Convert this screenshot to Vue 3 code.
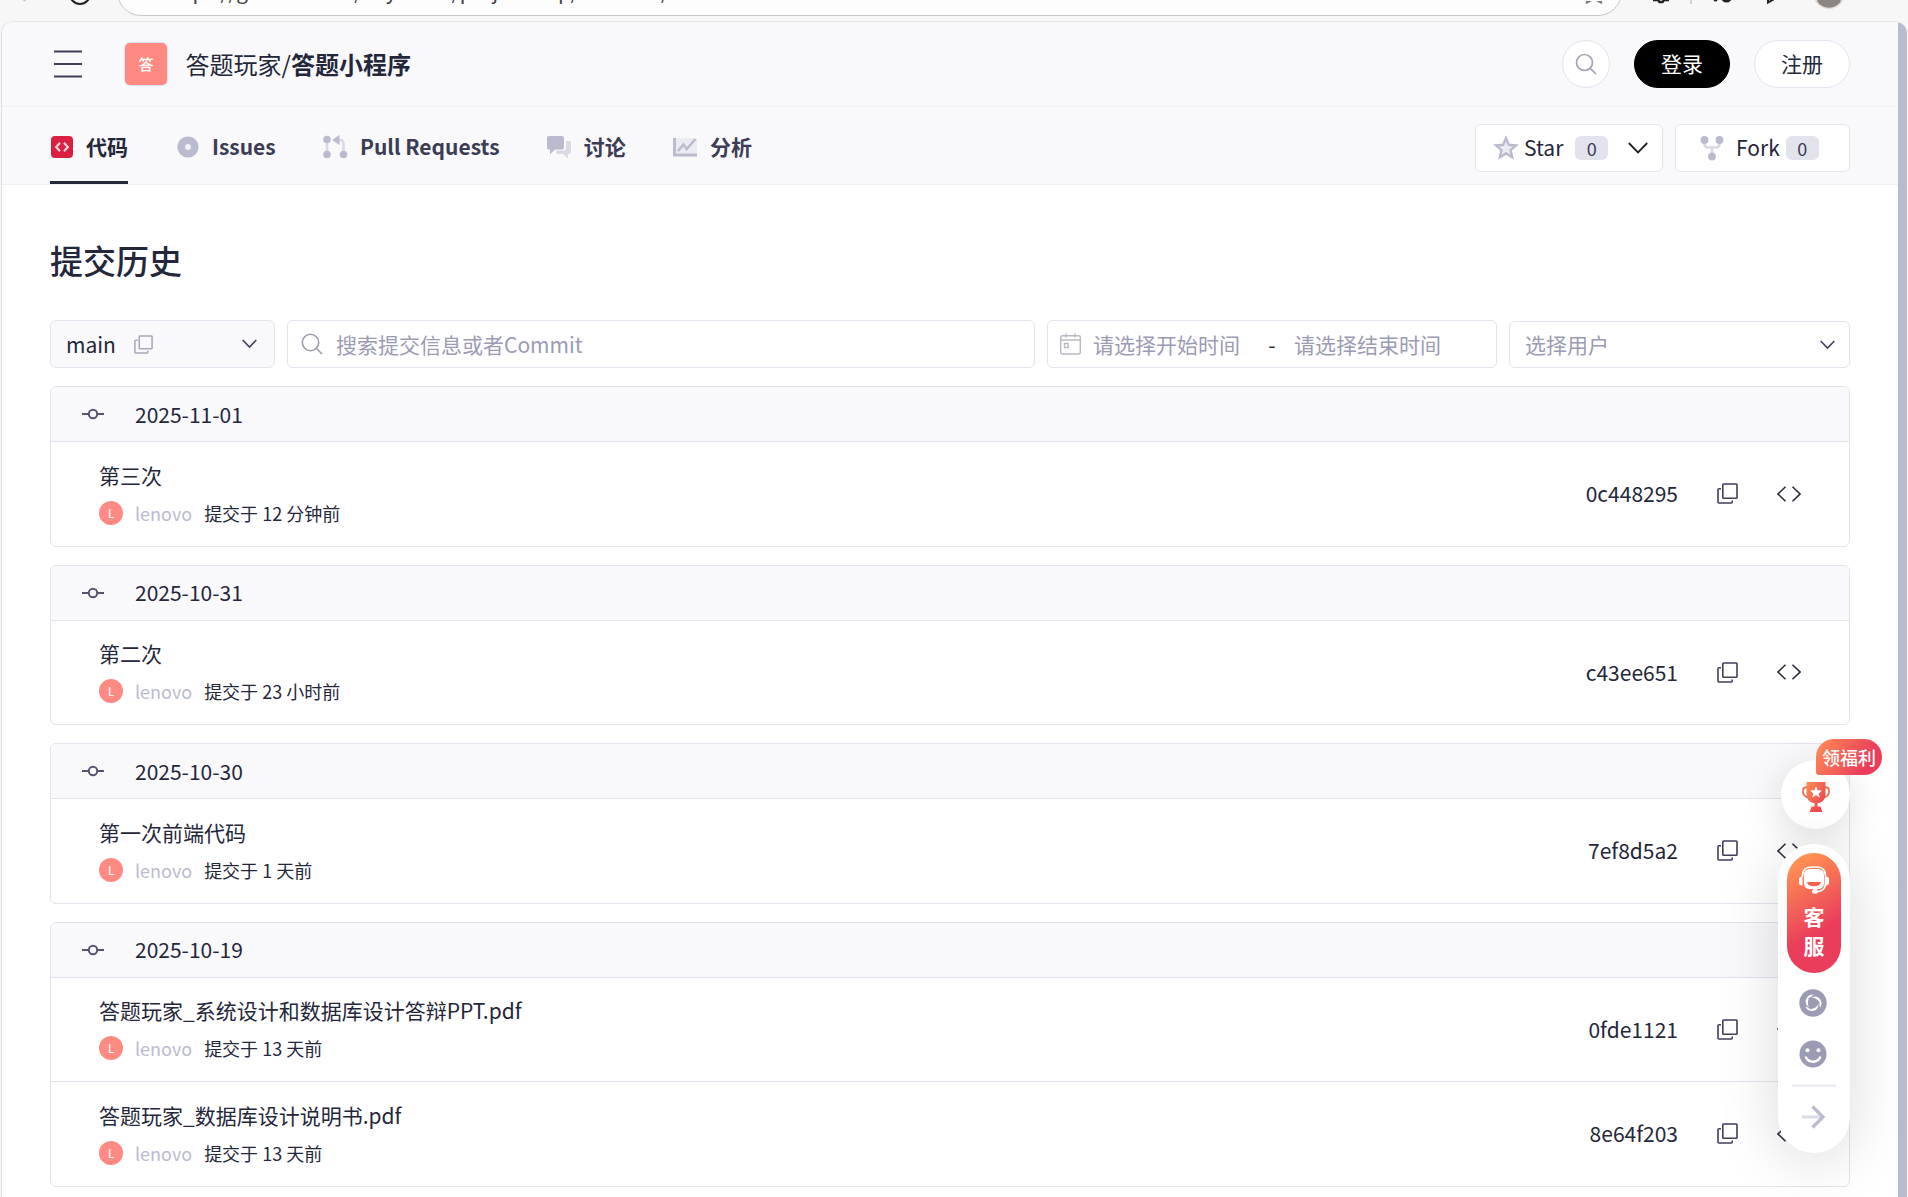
<script setup>
import { ref } from 'vue'

const tabs = ref([
  { key: 'code', name: '代码' },
  { key: 'issues', name: 'Issues' },
  { key: 'pulls', name: 'Pull Requests' },
  { key: 'discuss', name: '讨论' },
  { key: 'analysis', name: '分析' }
])
const activeTab = ref('code')

const commitGroups = ref([
  {
    date: '2025-11-01',
    commits: [{ title: '第三次', time: '12 分钟前', hash: '0c448295' }]
  },
  {
    date: '2025-10-31',
    commits: [{ title: '第二次', time: '23 小时前', hash: 'c43ee651' }]
  },
  {
    date: '2025-10-30',
    commits: [{ title: '第一次前端代码', time: '1 天前', hash: '7ef8d5a2' }]
  },
  {
    date: '2025-10-19',
    commits: [
      { title: '答题玩家_系统设计和数据库设计答辩PPT.pdf', time: '13 天前', hash: '0fde1121' },
      { title: '答题玩家_数据库设计说明书.pdf', time: '13 天前', hash: '8e64f203' }
    ]
  }
])
</script>

<template>
  <div class="window">

    <div class="chrome">
      <svg class="chrome-left" width="117" height="21" viewBox="0 0 117 21">
        <path d="M22 -3l3 4" stroke="#bbb" stroke-width="2" fill="none" />
        <path d="M70 -6a10 10 0 0 0 20 0" stroke="#222" stroke-width="2" fill="none" />
      </svg>
      <div class="address">
        <svg width="20" height="10" viewBox="0 0 20 10">
          <path d="M3 -4h13v3h-13z" fill="#444" stroke="#444" stroke-width="2" stroke-linejoin="round" />
        </svg>
        <span class="url">https://gitcode.com/dayhome/projectmap/commits/</span>
        <svg class="fav" width="20" height="10" viewBox="0 0 20 10">
          <path d="M4.500 -6L2.500 2L10 -2L17.500 2L15.500 -6" fill="none" stroke="#777" stroke-width="1.600" stroke-linejoin="round" />
        </svg>
      </div>
      <svg width="286" height="21" viewBox="0 0 286 21">
        <path d="M31 0h5l1.500 2h3L42 0h5" stroke="#222" stroke-width="2.400" fill="none" />
        <path d="M69 -2v6" stroke="#c8c8c8" stroke-width="1.600" />
        <circle cx="93.500" cy="-.5" r="2" fill="#222" />
        <circle cx="104.500" cy="-3" r="5.500" fill="#222" />
        <path d="M146 -3v5.500l8-4.500" stroke="#222" stroke-width="2" fill="none" />
        <circle cx="207" cy="-7" r="16" fill="#ddd" />
        <path d="M195 1a14 14 0 0 0 24 0l-4-5h-16z" fill="#8b8682" />
      </svg>
    </div>

    <div class="page">
      <div class="main">

        <header class="header">
          <svg class="menu" width="28" height="28" viewBox="0 0 28 28">
            <path d="M0 1.500h28M0 14h28M0 26.500h28" stroke="#3f3f5a" stroke-width="2.200" />
          </svg>
          <div class="logo">答</div>
          <div class="repo-name">答题玩家/<b>答题小程序</b></div>
          <button class="search-btn">
            <svg width="22" height="22" viewBox="0 0 22 22" fill="none" stroke="#a3a3b5" stroke-width="1.700">
              <circle cx="9.500" cy="9.500" r="8" />
              <path d="M15.300 15.300L21 21" />
            </svg>
          </button>
          <button class="login">登录</button>
          <button class="register">注册</button>
        </header>

        <nav class="nav">
          <div
            v-for="tab in tabs"
            :key="tab.key"
            class="tab"
            :class="[tab.key, { active: tab.key === activeTab }]"
          >
            <svg v-if="tab.key === 'code'" width="24" height="24" viewBox="0 0 24 24">
              <rect x="1" y="1" width="22" height="22" rx="4" fill="#db1f40" />
              <path d="M10 7.800L6.200 12l3.800 4.200M14 7.800l3.800 4.200-3.800 4.200" fill="none" stroke="#fbd5dc" stroke-width="2.200" />
            </svg>
            <svg v-else-if="tab.key === 'issues'" width="24" height="24" viewBox="0 0 24 24">
              <circle cx="12" cy="12" r="10.600" fill="#bbbbd0" />
              <circle cx="12" cy="12" r="3" fill="#f0f0f6" />
            </svg>
            <svg v-else-if="tab.key === 'pulls'" width="26" height="24" viewBox="0 0 26 24">
              <path d="M5 5v14M12 5h6q3.500 0 3.500 4v10" fill="none" stroke="#dadae5" stroke-width="2.600" />
              <circle cx="5" cy="4.500" r="3.800" fill="#bbbbd0" />
              <circle cx="5" cy="19.500" r="3.800" fill="#bbbbd0" />
              <circle cx="21.500" cy="19.500" r="3.800" fill="#bbbbd0" />
              <path d="M10 5l7.500-5v10z" fill="#bbbbd0" />
            </svg>
            <svg v-else-if="tab.key === 'discuss'" width="26" height="24" viewBox="0 0 26 24">
              <path d="M20 6h3a2 2 0 0 1 2 2v9a2 2 0 0 1-2 2h-1v4.500L17 19h-5a2 2 0 0 1-2-2v-1.500h8a2 2 0 0 0 2-2z" fill="#dadae5" />
              <path d="M2.500 1h13.500a2 2 0 0 1 2 2v9.500a2 2 0 0 1-2 2H9L4 19.500V14.500H2.500a1.500 1.500 0 0 1-1.500-1.500V2.500A1.500 1.500 0 0 1 2.500 1z" fill="#bbbbd0" />
            </svg>
            <svg v-else width="26" height="24" viewBox="0 0 26 24">
              <rect x="3" y="3" width="22" height="16" fill="#ebebf2" />
              <path d="M2.500 3v17h22.500" fill="none" stroke="#bbbbd0" stroke-width="3" />
              <path d="M6 16l5.500-6.500 3.200 4.500L23.500 4" fill="none" stroke="#bbbbd0" stroke-width="2.600" />
            </svg>
            <span>{{ tab.name }}</span>
          </div>

          <div class="repo-btn star">
            <div class="star-inner">
              <svg width="26" height="26" viewBox="0 0 26 26">
                <path d="M13 3.200l2.900 6.600 7.100.7-5.400 4.700 1.600 7-6.200-3.700-6.200 3.700 1.600-7L3 10.500l7.100-.7z" fill="#ebebf2" stroke="#bbbbd0" stroke-width="2.400" />
              </svg>
              <span class="label">Star</span>
              <span class="count">0</span>
            </div>
            <svg class="arrow" width="20" height="12" viewBox="0 0 20 12">
              <path d="M.8 1l9.200 9.500L19.200 1" fill="none" stroke="#222" stroke-width="1.800" />
            </svg>
          </div>
          <div class="repo-btn fork">
            <svg width="24" height="26" viewBox="0 0 24 26">
              <path d="M4.500 5v4q0 3.500 3.500 3.500h8q3.500 0 3.500-3.500V5M12 12v9" fill="none" stroke="#dadae5" stroke-width="2.600" />
              <circle cx="4.500" cy="5" r="3.900" fill="#bbbbd0" />
              <circle cx="19.500" cy="5" r="3.900" fill="#bbbbd0" />
              <circle cx="12" cy="21.500" r="3.900" fill="#bbbbd0" />
            </svg>
            <span class="label">Fork</span>
            <span class="count">0</span>
          </div>
        </nav>

        <div class="content">
          <h1>提交历史</h1>

          <div class="filters">
            <div class="box branch">
              <span>main</span>
              <svg width="19" height="19" viewBox="0 0 21 21" fill="none" stroke="#a8a8ba" stroke-width="1.700">
                <rect x="5.800" y="1" width="14.200" height="14.200" rx=".8" />
                <path d="M4 5.800H2a1 1 0 0 0-1 1V19a1 1 0 0 0 1 1h12.200a1 1 0 0 0 1-1v-1.500" />
              </svg>
              <svg class="arrow" width="15" height="10" viewBox="0 0 15 10">
                <path d="M.7 1l6.800 7 6.800-7" fill="none" stroke="#3f3f5a" stroke-width="1.600" />
              </svg>
            </div>
            <div class="box search">
              <svg width="22" height="22" viewBox="0 0 22 22" fill="none" stroke="#9b9bb4" stroke-width="1.600">
                <circle cx="9.500" cy="9.500" r="8.200" />
                <path d="M15.300 15.300L21 21" />
              </svg>
              <span>搜索提交信息或者Commit</span>
            </div>
            <div class="box range">
              <svg width="21" height="22" viewBox="0 0 21 22" fill="none" stroke="#b9b9c4" stroke-width="1.400">
                <rect x=".7" y="2.700" width="19.600" height="18.300" rx="1.500" />
                <path d="M.7 7h19.600M6 .5v4M15 .5v4" />
                <rect x="4.500" y="10.500" width="3.600" height="4" />
              </svg>
              <span>请选择开始时间</span>
              <i>-</i>
              <span>请选择结束时间</span>
            </div>
            <div class="box user">
              <span>选择用户</span>
              <svg class="arrow" width="15" height="10" viewBox="0 0 15 10">
                <path d="M.7 1l6.800 7 6.800-7" fill="none" stroke="#3f3f5a" stroke-width="1.600" />
              </svg>
            </div>
          </div>

          <div v-for="group in commitGroups" :key="group.date" class="card">
            <div class="card-head">
              <svg width="22" height="12" viewBox="0 0 22 12" fill="none" stroke="#55556e" stroke-width="2">
                <circle cx="11" cy="6" r="4.200" />
                <path d="M0 6h6.800M15.200 6H22" />
              </svg>
              <span>{{ group.date }}</span>
            </div>
            <div v-for="c in group.commits" :key="c.hash" class="commit">
              <div class="info">
                <div class="commit-title">{{ c.title }}</div>
                <div class="meta">
                  <span class="avatar">L</span>
                  <span class="author">lenovo</span>
                  <span>提交于 {{ c.time }}</span>
                </div>
              </div>
              <span class="hash">{{ c.hash }}</span>
              <svg class="copy" width="21" height="21" viewBox="0 0 21 21" fill="none" stroke="#3f3f5a" stroke-width="1.600">
                <rect x="5.800" y="1" width="14.200" height="14.200" rx=".8" />
                <path d="M4 5.800H2a1 1 0 0 0-1 1V19a1 1 0 0 0 1 1h12.200a1 1 0 0 0 1-1v-1.500" />
              </svg>
              <svg width="24" height="16" viewBox="0 0 24 16" fill="none" stroke="#2a2a3d" stroke-width="1.600">
                <path d="M8.500 .7L1 8l7.500 7.300M15.500 .7L23 8l-7.500 7.300" />
              </svg>
            </div>
          </div>
        </div>
      </div>
      <div class="scrollbar"></div>
    </div>

    <div class="reward">
      <svg width="28" height="30" viewBox="0 0 28 30">
        <defs>
          <linearGradient id="cup" x1="0" y1="0" x2="1" y2="1">
            <stop offset="0" stop-color="#ff8f52" />
            <stop offset="1" stop-color="#e8344f" />
          </linearGradient>
        </defs>
        <path d="M6 5.500H3q-2 0-2 4.500t6.500 6M22 5.500h3q2 0 2 4.500t-6.500 6" fill="none" stroke="#f2694f" stroke-width="1.800" />
        <path d="M4.500 0h19v12q0 7-6.500 9h-1.500v3.500h3l1.800 5.500H7.700l1.800-5.500h3V21H11q-6.500-2-6.500-9z" fill="url(#cup)" />
        <path d="M14 4.300l1.700 3.900 4.200.4-3.200 2.800 1 4.100-3.700-2.200-3.700 2.200 1-4.100-3.200-2.800 4.200-.4z" fill="#fff" />
      </svg>
      <span class="bonus">领福利</span>
    </div>

    <div class="side-panel">
      <div class="service">
        <svg width="30" height="28" viewBox="0 0 30 28">
          <path d="M3.500 11V10Q3.500 1 12 1h6q8.500 0 8.500 9v7.500q0 7.500-9 8.500" fill="none" stroke="#fff" stroke-width="1.700" />
          <path d="M0 13q0-2.500 3.500-2.500v9Q0 19.500 0 17zM30 13q0-2.500-3.500-2.500v9q3.500 0 3.500-2.500z" fill="#fff" />
          <rect x="5" y="3" width="20" height="20" rx="5.500" fill="#fff" />
          <path d="M8 16h14q-1 4.300-7 4.300T8 16z" fill="#f1624f" />
          <rect x="13" y="23" width="6" height="4.800" rx="2.400" fill="#fff" />
        </svg>
        <span>客</span>
        <span>服</span>
      </div>
      <svg class="swirl" width="28" height="28" viewBox="0 0 28 28">
        <circle cx="14" cy="14" r="13.700" fill="#9b9bb4" />
        <g fill="#fff">
          <path d="M7.500 9.500A8.800 8.800 0 0 1 22.500 13.500Q22.800 16.500 21 19Q21.500 12.500 17 9.800Q12.500 7.300 7.500 9.500z" />
          <path d="M7.500 9.500A8.800 8.800 0 0 1 22.500 13.500Q22.800 16.500 21 19Q21.500 12.500 17 9.800Q12.500 7.300 7.500 9.500z" transform="rotate(120 14 14)" />
          <path d="M7.500 9.500A8.800 8.800 0 0 1 22.500 13.500Q22.800 16.500 21 19Q21.500 12.500 17 9.800Q12.500 7.300 7.500 9.500z" transform="rotate(240 14 14)" />
        </g>
        <g fill="none" stroke="#9b9bb4" stroke-width="1.100">
          <path d="M9.500 9.800Q16 5 21.500 8.500" />
          <path d="M9.500 9.800Q16 5 21.500 8.500" transform="rotate(120 14 14)" />
          <path d="M9.500 9.800Q16 5 21.500 8.500" transform="rotate(240 14 14)" />
        </g>
      </svg>
      <svg class="smile" width="28" height="28" viewBox="0 0 28 28">
        <circle cx="14" cy="14" r="13.500" fill="#9b9bb4" />
        <circle cx="8.500" cy="10.200" r="2" fill="#fff" />
        <circle cx="19.500" cy="10.200" r="2" fill="#fff" />
        <path d="M7 17.500q2 4.200 7 4.200t7-4.200" fill="none" stroke="#fff" stroke-width="2.500" stroke-linecap="round" />
      </svg>
      <div class="divider"></div>
      <svg width="24" height="26" viewBox="0 0 24 26" fill="none" stroke-width="3.200">
        <path d="M0 13h20" stroke="#dcdce8" />
        <path d="M10.500 2.500l10.500 10.500-10.500 10.500" stroke="#bbbbd0" />
      </svg>
    </div>

  </div>
</template>

<style>
body {
  margin: 0;
  background: #f7f7f7;
}
</style>

<style scoped>
.window {
  position: relative;
  display: flex;
  flex-direction: column;
  height: 1197px;
  overflow: hidden;
  font-family: "Noto Sans CJK SC", sans-serif;
  font-size: 21px;
  color: #24273a;
  background: #f7f7f7;
}

svg {
  display: block;
  flex-shrink: 0;
}

/* browser toolbar */
.chrome {
  display: flex;
  height: 21px;
  overflow: hidden;
}

.address {
  flex: 1;
  display: flex;
  height: 50px;
  margin-top: -34px;
  padding: 34px 17px 0 12px;
  box-sizing: border-box;
  border: 1.500px solid #c8c8c8;
  border-radius: 24px;
  background: #fdfdfd;
}

.url {
  margin: -24px 0 0 15px;
  font-size: 20.500px;
  line-height: 27px;
  color: #444;
  white-space: nowrap;
}

.fav {
  margin-left: auto;
}

/* page */
.page {
  flex: 1;
  display: flex;
  min-height: 0;
  margin: 0 1px;
  border-top: 1px solid #e6e6e8;
  border-left: 1px solid #e0e0e2;
  border-radius: 12px 12px 0 0;
  overflow: hidden;
  background: #fff;
}

.main {
  flex: 1;
}

.scrollbar {
  width: 9px;
  background: #bbbbd0;
}

.header {
  display: flex;
  align-items: center;
  height: 84px;
  padding: 0 48px 0 52px;
  background: #f9f9fb;
  border-bottom: 1px solid #f1f1f5;
}

.logo {
  width: 42px;
  height: 42px;
  margin: 0 18.500px 0 43px;
  border-radius: 5px;
  background: #ff8a84;
  box-shadow: 0 0 0 1px #e3e3ed;
  color: #fff;
  font-size: 15px;
  font-weight: 500;
  line-height: 41px;
  text-align: center;
}

.repo-name {
  padding-bottom: 2px;
  font-size: 24px;
}

button {
  box-sizing: border-box;
  height: 48px;
  padding: 0;
  border: 1px solid #e3e3ed;
  border-radius: 24px;
  background: #fff;
  font: inherit;
  color: inherit;
}

.search-btn {
  display: flex;
  align-items: center;
  justify-content: center;
  width: 48px;
  margin-left: auto;
}

.login,
.register {
  width: 96px;
  margin-left: 24px;
  padding-bottom: 2px;
}

.login {
  background: #000;
  border-color: #000;
  color: #fff;
}

.nav {
  display: flex;
  align-items: center;
  height: 77px;
  padding: 0 48px;
  background: #f9f9fb;
  border-bottom: 1px solid #f1f1f5;
}

.tab {
  display: flex;
  align-items: center;
  gap: 12px;
  box-sizing: border-box;
  height: 77px;
  padding-top: 3px;
  margin-right: 48px;
  border-bottom: 3px solid transparent;
  font-weight: 600;
  color: #3c3c55;
}

.tab svg {
  margin-top: 3px;
}

.tab.active {
  border-color: #26293a;
  color: #24273a;
}

.tab.issues,
.tab.pulls,
.tab.discuss {
  margin-right: 46.200px;
}

.repo-btn {
  display: flex;
  align-items: center;
  box-sizing: border-box;
  height: 48px;
  margin-top: 5px;
  border: 1px solid #e3e3ed;
  border-radius: 6px;
  background: #fff;
}

.star {
  width: 188px;
  margin-left: auto;
  padding-left: 11px;
}

.star-inner {
  display: flex;
  align-items: center;
  gap: 5px;
  width: 132px;
  padding-left: 6px;
  box-sizing: border-box;
}

.star .count {
  margin-left: 7px;
}

.star .arrow {
  margin-left: 9px;
}

.fork {
  width: 175px;
  margin-left: 12px;
  padding-left: 24px;
}

.label {
  padding-bottom: 2px;
}

.fork .label {
  margin: 0 6px 0 12px;
}

.count {
  width: 33px;
  height: 24px;
  border-radius: 6px;
  background: #e3e3ed;
  font-size: 18px;
  line-height: 25px;
  text-align: center;
  color: #3c3c55;
}

.content {
  padding: 50px 48px 0;
}

h1 {
  margin: 0;
  font-size: 33px;
  font-weight: 500;
  line-height: 50px;
}

.filters {
  display: flex;
  gap: 12px;
  align-items: flex-end;
  margin: 35px 0 18px;
}

.box {
  display: flex;
  align-items: center;
  box-sizing: border-box;
  height: 48px;
  border: 1px solid #e3e3ed;
  border-radius: 6px;
  color: #9b9bb4;
}

.branch {
  width: 225px;
  padding: 0 17px 0 15px;
  background: #f9f9fb;
  color: #24273a;
}

.branch > span {
  margin-right: 18px;
}

.box .arrow {
  margin-left: auto;
}

.search {
  flex: 1;
  padding-left: 13px;
  gap: 13px;
}

.range {
  width: 450px;
  padding-left: 12px;
}

.range svg {
  margin-right: 12px;
}

.range i {
  width: 54px;
  padding-left: 10px;
  box-sizing: border-box;
  font-style: normal;
  text-align: center;
  color: #24273a;
}

.user {
  width: 341px;
  height: 47px;
  padding: 0 14px 0 15px;
}

.user span {
  padding-bottom: 2px;
}

/* commit list */
.card {
  margin-bottom: 18px;
  border: 1px solid #e3e3ed;
  border-radius: 6px;
  overflow: hidden;
}

.card-head {
  display: flex;
  align-items: center;
  gap: 31px;
  height: 54px;
  padding-left: 31px;
  background: #f9f9fb;
}

.card-head span {
  padding-bottom: 1px;
}

.commit {
  display: flex;
  align-items: center;
  box-sizing: border-box;
  height: 104.500px;
  padding: 0 48px;
  border-top: 1px solid #e3e3ed;
}

.info {
  flex: 1;
  padding-bottom: 2px;
}

.commit-title {
  line-height: 32px;
}

.meta {
  display: flex;
  align-items: center;
  gap: 12px;
  margin-top: 8px;
  font-size: 18px;
  line-height: 28px;
}

.avatar {
  width: 24px;
  height: 24px;
  border-radius: 50%;
  background: #ff8a84;
  color: #fff;
  font-size: 11px;
  font-weight: 500;
  line-height: 24px;
  text-align: center;
}

.author {
  color: #bbbbd0;
}

.hash {
  padding-bottom: 1px;
}

.copy {
  margin: 0 39px;
}

/* floating widgets */
.reward {
  position: absolute;
  top: 760px;
  right: 58px;
  display: flex;
  align-items: center;
  justify-content: center;
  width: 69px;
  height: 69px;
  padding-top: 4px;
  box-sizing: border-box;
  border-radius: 50%;
  background: #fff;
  box-shadow: 0 8px 40px rgba(0, 0, 0, 0.14);
}

.bonus {
  position: absolute;
  top: -21px;
  left: 35px;
  width: 66px;
  height: 36px;
  border-radius: 18px 18px 18px 3px;
  background: linear-gradient(120deg, #ff8f52, #ea3d5c 75%);
  color: #fff;
  font-size: 18px;
  font-weight: 500;
  line-height: 37px;
  text-align: center;
}

.side-panel {
  position: absolute;
  top: 844px;
  right: 58px;
  display: flex;
  flex-direction: column;
  align-items: center;
  width: 72px;
  height: 309px;
  padding-top: 9px;
  box-sizing: border-box;
  border-radius: 36px;
  background: #fff;
  box-shadow: 0 8px 60px rgba(0, 0, 0, 0.15);
}

.service {
  display: flex;
  flex-direction: column;
  align-items: center;
  width: 54px;
  height: 120px;
  padding-top: 13px;
  box-sizing: border-box;
  border-radius: 27px;
  background: linear-gradient(150deg, #ff8f52 10%, #ea3d5c 65%);
  color: #fff;
  font-weight: 700;
  line-height: 28.500px;
}

.service svg {
  margin-bottom: 8px;
}

.swirl {
  margin: 16px 2px 0 0;
}

.smile {
  margin: 23px 2px 0 0;
}

.divider {
  width: 44px;
  height: 3px;
  margin: 16px 0 17px;
  background: #ededf5;
}
</style>
